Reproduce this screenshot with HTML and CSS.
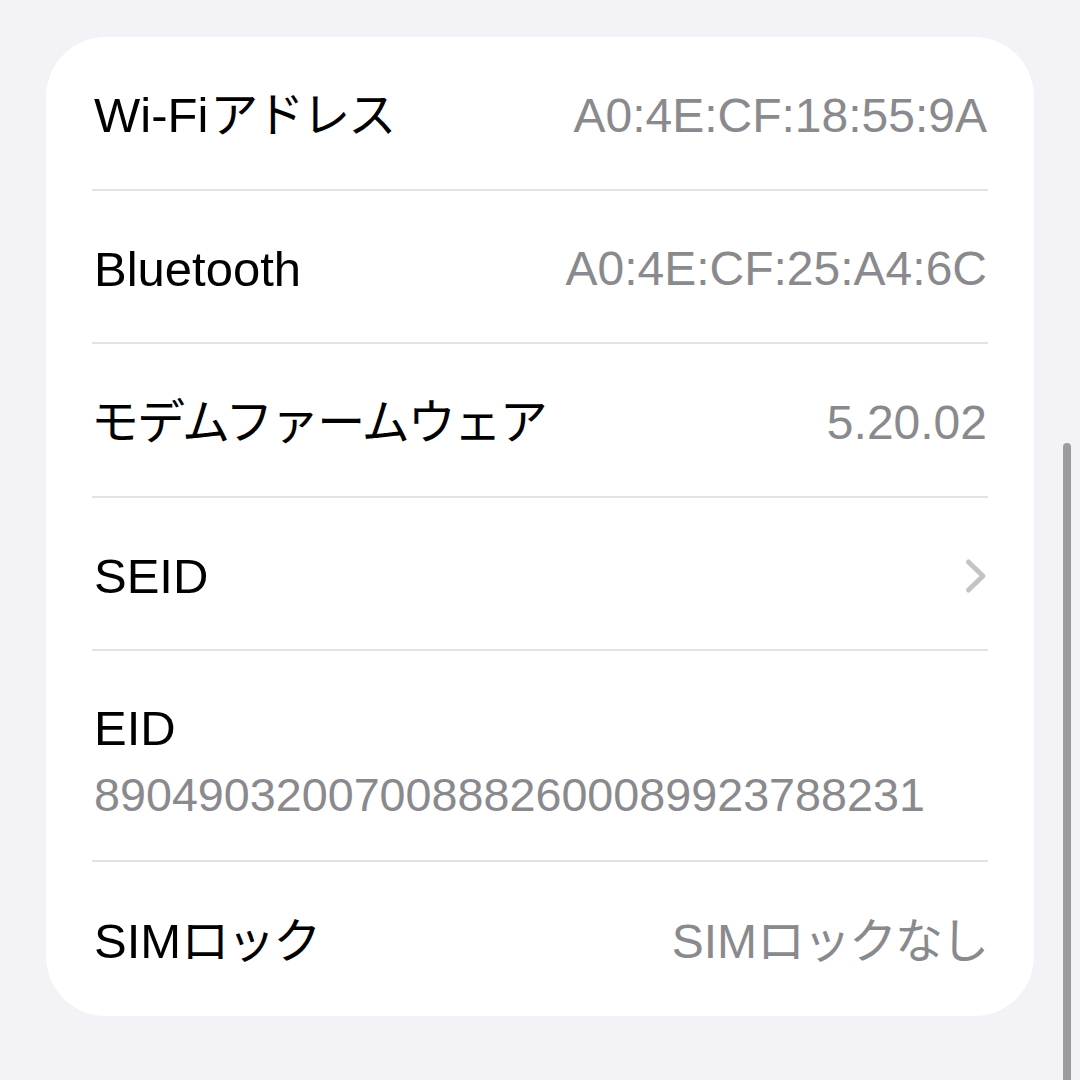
FILE: index.html
```html
<!DOCTYPE html>
<html lang="ja">
<head>
<meta charset="utf-8">
<link rel="stylesheet" href="styles.css">
</head>
<body>
<div class="page">
  <div class="card">
    <div class="row">
      <span class="label">Wi-Fi<span class="jp gap">アドレス</span></span>
      <span class="value">A0:4E:CF:18:55:9A</span>
    </div>
    <div class="row">
      <span class="label">Bluetooth</span>
      <span class="value">A0:4E:CF:25:A4:6C</span>
    </div>
    <div class="row">
      <span class="label"><span class="jp lead">モデムファームウェア</span></span>
      <span class="value">5.20.02</span>
    </div>
    <div class="row">
      <span class="label">SEID</span>
      <svg class="chevron" width="26" height="38" viewBox="0 0 26 38"><path d="M5.5 5 L20 19 L5.5 33" fill="none" stroke="#c4c4c7" stroke-width="5" stroke-linecap="round" stroke-linejoin="round"/></svg>
    </div>
    <div class="row row-stack">
      <span class="label">EID</span>
      <span class="value sub">89049032007008882600089923788231</span>
    </div>
    <div class="row row-last">
      <span class="label">SIM<span class="jp">ロック</span></span>
      <span class="value">SIM<span class="jp">ロックなし</span></span>
    </div>
  </div>
</div>
<div class="scrollbar"></div>
</body>
</html>
```

FILE: styles.css
```css
* { box-sizing: border-box; }
html, body {
  margin: 0;
  padding: 0;
  width: 1080px;
  height: 1080px;
  overflow: hidden;
  background: #f2f2f7;
  font-family: "Liberation Sans", "Noto Sans CJK JP", sans-serif;
}
.page {
  padding: 37px 46px 0 46px;
}
.card {
  width: 988px;
  height: 979px;
  background: #ffffff;
  border-radius: 60px;
  display: flex;
  flex-direction: column;
  padding: 0 46px;
}
.row {
  height: 153.5px;
  display: flex;
  align-items: center;
  justify-content: space-between;
  border-bottom: 2px solid #e3e3e6;
  padding: 6px 1px 0 2px;
  flex-shrink: 0;
}
.row-stack {
  height: 211px;
  flex-direction: column;
  align-items: flex-start;
  justify-content: center;
  gap: 11px;
  padding-top: 12px;
}
.row-last {
  border-bottom: none;
}
.label {
  font-size: 49px;
  color: #000000;
  line-height: 56px;
}
.value {
  font-size: 48px;
  color: #8a8a8e;
  line-height: 56px;
}
.jp {
  font-size: 48px;
  letter-spacing: -2px;
}
.gap {
  margin-left: 2px;
}
.lead {
  margin-left: -3px;
}
.sub {
  font-size: 46.7px;
}
.chevron {
  display: block;
  margin-right: -2px;
}
.scrollbar {
  position: absolute;
  left: 1063px;
  top: 443px;
  width: 8px;
  height: 660px;
  border-radius: 4px;
  background: #9b9b9f;
}
```
